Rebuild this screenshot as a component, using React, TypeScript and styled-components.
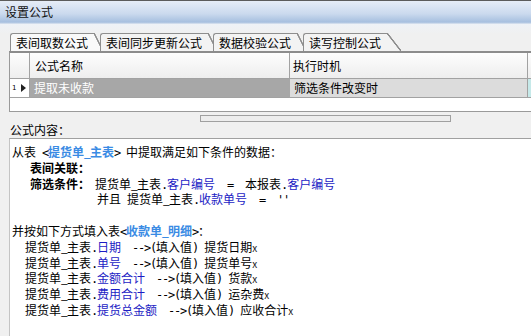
import styled, { createGlobalStyle } from 'styled-components';

const GlobalStyle = createGlobalStyle`
    html, body {
        margin: 0;
        padding: 0;
    }
    body {
        font-family: "Noto Sans CJK SC", "Noto Sans", sans-serif;
        font-size: 12px;
        color: #000;
        background: #f0f0f0;
        overflow: hidden;
    }
`;

const tabs = ['表间取数公式', '表间同步更新公式', '数据校验公式', '读写控制公式'];

const mappings = [
    { field: '日期', target: '提货日期' },
    { field: '单号', target: '提货单号' },
    { field: '金额合计', target: '货款' },
    { field: '费用合计', target: '运杂费' },
    { field: '提货总金额', target: '应收合计' },
];

// 半角字符按 6px 等宽排，和原来的宋体一致
function Src({ name }: { name: string }): JSX.Element {
    const [a, b] = name.split('_');
    return (
        <>
            {a}
            <Under>_</Under>
            {b}
        </>
    );
}

export default function App(): JSX.Element {
    return (
        <Window>
            <GlobalStyle />
            <TitleBar>设置公式</TitleBar>
            <Body>
                <TabStrip>
                    {tabs.map((t, i) => (
                        <Tab key={t} $active={i === 0} $slant={i === tabs.length - 1 ? 14 : 9}>
                            {t}
                        </Tab>
                    ))}
                </TabStrip>
                <GridPanel>
                    <Grid>
                        <HeadCell $pad={0} />
                        <HeadCell $pad={5}>公式名称</HeadCell>
                        <HeadCell $pad={3}>执行时机</HeadCell>
                        <HeadCell $pad={0} />
                        <Cell $tone="indicator">
                            <RowNo>1</RowNo>
                            <RowArrow />
                        </Cell>
                        <Cell $tone="selected">提取未收款</Cell>
                        <Cell $tone="plain">筛选条件改变时</Cell>
                        <Cell $tone="edge" />
                    </Grid>
                </GridPanel>
                <Splitter />
                <SectionLabel>公式内容：</SectionLabel>
                <Editor>
                    <Line>
                        从表<Half> &lt;</Half>
                        <TableRef>
                            <Src name="提货单_主表" />
                        </TableRef>
                        <Half>&gt; </Half>中提取满足如下条件的数据：
                    </Line>
                    <Line $indent={18}>
                        <Label>表间关联：</Label>
                    </Line>
                    <Line $indent={18}>
                        <Label $w={65}>筛选条件：</Label>
                        <Src name="提货单_主表" />
                        <Half>.</Half>
                        <Field>客户编号</Field>
                        <Half>  =  </Half>本报表<Half>.</Half>
                        <Field>客户编号</Field>
                    </Line>
                    <Line $indent={85}>
                        并且<Half> </Half>
                        <Src name="提货单_主表" />
                        <Half>.</Half>
                        <Field>收款单号</Field>
                        <Half>  =  ''</Half>
                    </Line>
                    <Line />
                    <Line>
                        并按如下方式填入表<Half>&lt;</Half>
                        <TableRef>
                            <Src name="收款单_明细" />
                        </TableRef>
                        <Half>&gt;</Half>：
                    </Line>
                    {mappings.map((m) => (
                        <Line key={m.field} $indent={13}>
                            <Src name="提货单_主表" />
                            <Half>.</Half>
                            <Field>{m.field}</Field>
                            <Arrow>--&gt;(</Arrow>填入值<Half>) </Half>
                            {m.target}
                            <Mark>x</Mark>
                        </Line>
                    ))}
                </Editor>
            </Body>
        </Window>
    );
}

const Window = styled.div`
    width: 531px;
    height: 336px;
    overflow: hidden;
    display: flex;
    flex-direction: column;
`;

const TitleBar = styled.div`
    flex: none;
    height: 24px;
    box-sizing: border-box;
    border-top: 1px solid #5c5c5c;
    padding-left: 5px;
    line-height: 22px;
    font-size: 12px;
    color: #111;
    background: linear-gradient(#e6edf7 0%, #cbdaee 55%, #a6bfdf 92%, #dfe7f1 100%);
`;

const Body = styled.div`
    flex: 1;
    display: flex;
    flex-direction: column;
    padding: 9px 0 0 9px;
    background: linear-gradient(#eef2f7 0px, #f0f0f0 10px);
    min-height: 0;
`;

const TabStrip = styled.div`
    flex: none;
    display: flex;
    height: 18px;
    margin-left: 1px;
`;

const Tab = styled.div<{ $active?: boolean; $slant: number }>`
    position: relative;
    box-sizing: border-box;
    height: 18px;
    padding: 0 6px 0 5px;
    margin-right: 6px;
    border-left: 1px solid #8e8e8e;
    border-top: 1px solid #8e8e8e;
    border-top-left-radius: 3px;
    line-height: 17px;
    white-space: nowrap;
    background: ${(p) => (p.$active ? '#f9f9f9' : '#f3f3f3')};

    &:nth-child(2) {
        margin-right: 5px;
    }

    &::after {
        content: '';
        position: absolute;
        top: -1px;
        left: 100%;
        width: ${(p) => p.$slant}px;
        height: 18px;
        background: linear-gradient(
            to bottom left,
            transparent calc(50% - 1px),
            #8e8e8e calc(50% - 0.5px),
            #8e8e8e calc(50% + 0.5px),
            ${(p) => (p.$active ? '#f9f9f9' : '#f3f3f3')} calc(50% + 1px)
        );
    }
`;

const GridPanel = styled.div`
    flex: none;
    height: 61px;
    box-sizing: border-box;
    border-top: 2px solid #8c8c8c;
    border-left: 1px solid #9a9a9a;
    border-bottom: 1px solid #9a9a9a;
    background: #fff;
    margin-right: -10px;
`;

const Grid = styled.div`
    display: grid;
    grid-template-columns: 20px 260px 238px 20px;
    grid-template-rows: 26px 19px;
`;

const HeadCell = styled.div<{ $pad: number }>`
    box-sizing: border-box;
    padding: 2px 0 0 ${(p) => p.$pad}px;
    border-right: 1px solid #a2a2a2;
    border-bottom: 1px solid #a2a2a2;
    line-height: 22px;
    background: linear-gradient(#fdfdfd, #eeeeee);
`;

const toneBg = {
    indicator: '#ffffff',
    selected: '#a7a7a7',
    plain: '#dcdcdc',
    edge: '#c6e9e9',
};

const Cell = styled.div<{ $tone: keyof typeof toneBg }>`
    box-sizing: border-box;
    display: flex;
    align-items: center;
    padding-left: ${(p) => (p.$tone === 'indicator' ? 2 : 4)}px;
    border-right: 1px solid ${(p) => (p.$tone === 'selected' ? '#a7a7a7' : '#a2a2a2')};
    border-bottom: 1px solid #a2a2a2;
    background: ${(p) => toneBg[p.$tone]};
    color: ${(p) => (p.$tone === 'selected' ? '#fff' : '#000')};
    line-height: 18px;
    white-space: nowrap;
`;

const RowNo = styled.span`
    font-family: "DejaVu Sans", sans-serif;
    font-size: 7px;
    margin-right: 5px;
`;

const RowArrow = styled.span`
    width: 0;
    height: 0;
    border-top: 4px solid transparent;
    border-bottom: 4px solid transparent;
    border-left: 5px solid #222;
`;

const Splitter = styled.div`
    flex: none;
    width: 251px;
    height: 7px;
    box-sizing: border-box;
    margin: 3px 0 0 191px;
    border: 1px solid #a0a0a0;
    background: #ededed;
`;

const SectionLabel = styled.div`
    flex: none;
    height: 16px;
    line-height: 15px;
    padding-left: 1px;
`;

const Editor = styled.div`
    flex: 1;
    margin-right: -10px;
    padding: 5px 0 0 2px;
    border-top: 1px solid #a0a0a0;
    border-left: 1px solid #c4c4c4;
    background: #fff;
`;

const Line = styled.div<{ $indent?: number }>`
    height: 15.8px;
    line-height: 15.8px;
    padding-left: ${(p) => p.$indent ?? 0}px;
    white-space: pre;
`;

const Half = styled.span`
    font-family: "DejaVu Sans Mono", monospace;
    font-size: 12px;
    letter-spacing: -1.22px;
    white-space: pre;
`;

const Under = styled.span`
    display: inline-block;
    width: 6px;
    text-align: center;
`;

const TableRef = styled.span`
    color: #3a8be4;
    font-weight: bold;
`;

const Field = styled.span`
    color: #1c1cc4;
`;

const Label = styled.span<{ $w?: number }>`
    display: inline-block;
    font-weight: bold;
    width: ${(p) => (p.$w ? `${p.$w}px` : 'auto')};
`;

const Arrow = styled(Half)`
    margin-left: 11px;
`;

const Mark = styled.span`
    font-size: 10px;
    color: #222;
`;
